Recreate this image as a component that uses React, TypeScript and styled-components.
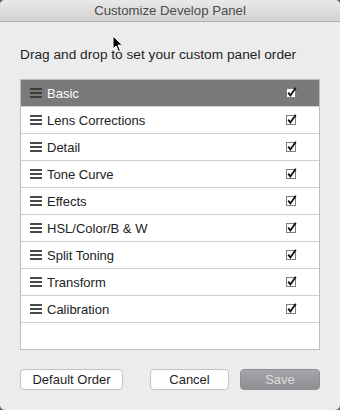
import styled, { createGlobalStyle } from 'styled-components';

const panels = [
  'Basic',
  'Lens Corrections',
  'Detail',
  'Tone Curve',
  'Effects',
  'HSL/Color/B & W',
  'Split Toning',
  'Transform',
  'Calibration',
];

const GlobalStyle = createGlobalStyle`
  html, body {
    margin: 0;
    padding: 0;
    background: #5d6470;
  }
  body {
    font-family: "Liberation Sans", Arial, sans-serif;
  }
`;

const Handle = ({ dark }: { dark?: boolean }) => (
  <svg width="12" height="10" viewBox="0 0 12 10">
    <g fill={dark ? '#3c3c3c' : '#4a4a4a'}>
      <rect x="0" y="0" width="12" height="2" />
      <rect x="0" y="4" width="12" height="2" />
      <rect x="0" y="8" width="12" height="2" />
    </g>
  </svg>
);

const Check = () => (
  <svg width="12" height="12" viewBox="0 0 12 12">
    <rect x="0.5" y="1.5" width="9" height="9" fill="#fff" stroke="#7d7d7d" />
    <path d="M2.2 5.6 L4.4 8.4 L9.8 0.8" fill="none" stroke="#111" strokeWidth="1.8" />
  </svg>
);

const App = () => {
  return (
    <>
      <GlobalStyle />
      <Window>
        <TitleBar>Customize Develop Panel</TitleBar>
        <Content>
          <Instruction>Drag and drop to set your custom panel order</Instruction>
          <List>
            {panels.map((name, i) => (
              <Row key={name} selected={i === 0}>
                <Handle dark={i === 0} />
                <Label>{name}</Label>
                <Check />
              </Row>
            ))}
            <EmptyRow />
          </List>
          <Buttons>
            <Button>Default Order</Button>
            <RightGroup>
              <Button $width={79}>Cancel</Button>
              <SaveButton>Save</SaveButton>
            </RightGroup>
          </Buttons>
        </Content>
        <Cursor>
          <svg width="12" height="18" viewBox="0 0 12 18">
            <path d="M1 1 L1 14 L4 11 L6.5 16.5 L8.5 15.6 L6 10.2 L10.5 10.2 Z" fill="#000" stroke="#fff" strokeWidth="1" />
          </svg>
        </Cursor>
      </Window>
    </>
  );
};

export default App;

const Window = styled.div`
  position: relative;
  width: 340px;
  height: 410px;
  box-sizing: border-box;
  background: #ececec;
  border-radius: 5px;
  overflow: hidden;
  display: flex;
  flex-direction: column;
`;

const TitleBar = styled.div`
  height: 21px;
  flex-shrink: 0;
  background: linear-gradient(#e9e9e9, #d2d2d2);
  border-bottom: 1px solid #b1b1b1;
  color: #4b4b4b;
  font-size: 13.2px;
  line-height: 22px;
  text-align: center;
`;

const Content = styled.div`
  padding: 25px 20px 0;
  display: flex;
  flex-direction: column;
`;

const Instruction = styled.p`
  margin: 0 0 16px;
  font-size: 13.7px;
  line-height: 16px;
  color: #1f1f1f;
`;

const List = styled.div`
  border: 1px solid #bdbdbd;
  background: #fff;
  display: flex;
  flex-direction: column;
`;

const Row = styled.div<{ selected?: boolean }>`
  height: 26px;
  border-bottom: 1px solid #cfcfcf;
  display: flex;
  align-items: center;
  padding: 0 21px 0 9px;
  background: ${(p) => (p.selected ? '#7a7a7a' : '#fff')};
  color: ${(p) => (p.selected ? '#fff' : '#222')};
`;

const Label = styled.span`
  flex: 1;
  margin-left: 5px;
  font-size: 13px;
`;

const EmptyRow = styled.div`
  height: 26px;
`;

const Buttons = styled.div`
  margin-top: 19px;
  display: flex;
  align-items: center;
`;

const RightGroup = styled.div`
  margin-left: auto;
  display: flex;
  gap: 11px;
`;

const Button = styled.button<{ $width?: number }>`
  width: ${(p) => (p.$width ? `${p.$width}px` : '103px')};
  height: 21px;
  padding: 0;
  border: 1px solid #c4c4c4;
  border-radius: 4px;
  background: #fff;
  color: #1e1e1e;
  font-family: "Liberation Sans", Arial, sans-serif;
  font-size: 13px;
`;

const SaveButton = styled(Button)`
  width: 80px;
  border-color: #8e8e8e;
  background: linear-gradient(#a6a6aa, #8f8f93);
  color: #dcdcdc;
`;

const Cursor = styled.div`
  position: absolute;
  left: 112px;
  top: 35px;
  line-height: 0;
`;
